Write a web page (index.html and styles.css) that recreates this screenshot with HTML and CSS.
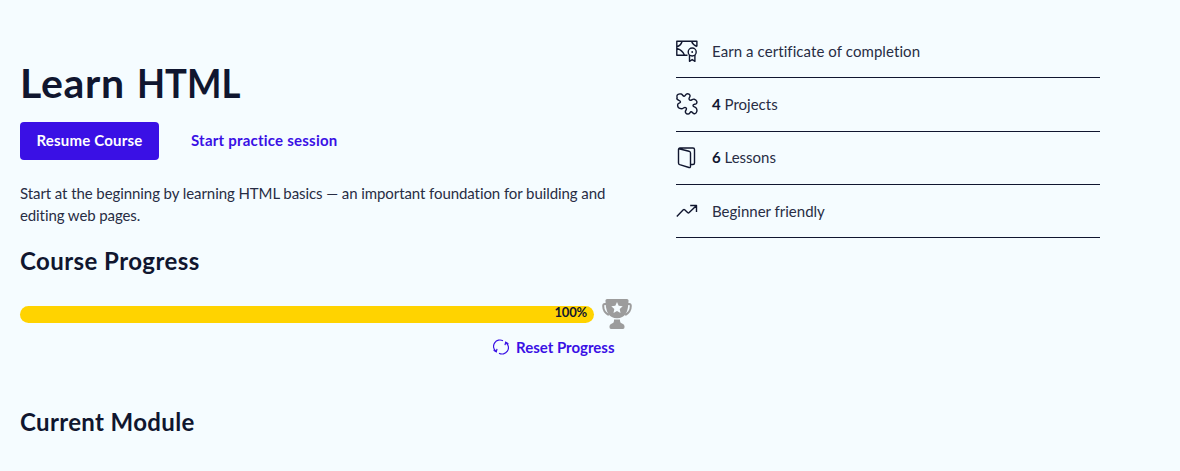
FILE: index.html
```html
<!DOCTYPE html>
<html lang="en">
<head>
<meta charset="utf-8">
<title>Learn HTML</title>
<link rel="stylesheet" href="styles.css">
</head>
<body>
<div class="page">
  <main class="course">
    <h1 class="title">Learn <span class="title-tag">HTML</span></h1>
    <div class="actions">
      <button class="resume"><span>Resume Course</span></button>
      <a class="practice"><span>Start practice session</span></a>
    </div>
    <p class="summary"><span class="line-one">Start at the beginning by learning HTML basics — an important foundation for building and</span><br><span class="line-two">editing web pages.</span></p>
    <h2 class="section-title progress-title"><span>Course Progress</span></h2>
    <div class="progress">
      <div class="bar"><span class="percent">100%</span></div>
      <svg class="trophy" viewBox="0 0 30 30">
        <path d="M5 5H2.8Q1.2 5 1.2 7C1.2 11 3 14 6.8 16M25 5h2.2q1.6 0 1.6 2c0 4-1.8 7-5.6 9" fill="none" stroke="#9c9c9c" stroke-width="2"/>
        <path d="M3.5 1.5Q3.5 0 5 0h20q1.500 0 1.500 1.500C26.500 13 23 19.200 15 19.200S3.500 13 3.500 1.500z" fill="#9c9c9c"/>
        <path d="M12 20.500h6v1.500q0 2 2.500 2.700Q22.500 25.300 22.500 27.300V28.300Q22.500 30 21 30H9Q7.500 30 7.500 28.300V27.300Q7.500 25.300 9.500 24.700 12 24 12 22z" fill="#9c9c9c"/>
        <path d="m15 3 1.700 3.700 4 .5-3 2.800.8 4-3.500-2-3.500 2 .8-4-3-2.800 4-.5z" fill="#f5fcff"/>
      </svg>
    </div>
    <a class="reset">
      <svg class="reset-icon" viewBox="0 0 16 16" fill="none" stroke="currentColor" stroke-width="1.200">
        <path d="M10 1.800A6.400 6.400 0 0 0 2.800 12.300M6 14.200A6.400 6.400 0 0 0 13.200 3.700"/>
        <path d="M.6 11.300 3.300 12.800 4 9.800M15.400 4.700 12.700 3.200 12 6.200"/>
      </svg>
      <span>Reset Progress</span>
    </a>
    <h2 class="section-title module-title"><span>Current Module</span></h2>
  </main>
  <ul class="facts">
    <li class="fact">
      <svg class="icon" viewBox="0 0 22 22">
        <path d="M11.500 15.300H.8V1.300h20.100v5.300M.8 6.700Q4.800 5.800 6.200 1.300M15.500 1.300Q17 5.300 20.900 6.500M.8 8.500Q6.200 9.700 8.600 15.300"/>
        <circle cx="16.200" cy="12" r="4"/><circle class="dot" cx="16.200" cy="12" r=".9"/>
        <path d="M13.500 15v6.300l2.700-1.800 2.700 1.800V15"/>
      </svg>
      <span class="certificate">Earn a certificate of completion</span>
    </li>
    <li class="fact">
      <svg class="icon" viewBox="0 0 22 22">
        <path d="M1 3.500C.5 1.500 3 .5 5.200 1 6.800 1.400 6.800 3.700 8.500 3.200 9.700 2.700 9.400.8 11.500.8 14 .8 14.600 3 13.400 4.600 12.500 6 13.500 7.500 15 7.200 16.300 7 16.500 5.800 18.200 6.200 20.700 6.800 21.800 9.600 20 10.800 18.800 11.500 17 11 17 12.400 17 14 19.300 13.500 20.400 15.300 21.400 17 21 20 19 20.700 17 21.500 16.600 18.700 15.200 18.800 13.700 18.900 14 21 12 21 9.900 21 8.700 19 9.800 17.500 10.900 16 10.600 14.500 9 14.400 7.500 14.400 7.400 15.700 5.500 15.700 3 15.700 1.600 14 1.600 12 1.600 10 4.300 10.500 4.500 9 4.700 7.300 2 7.500 1 6 .5 5 1.500 4.500 1 3.500z"/>
      </svg>
      <span class="projects"><b>4</b> Projects</span>
    </li>
    <li class="fact">
      <svg class="icon" viewBox="0 0 22 22">
        <path d="M3 1.700 13 4.200Q14.500 4.700 14.500 6V19.300Q14.500 21 13 20.500L3.700 17.700Q2.500 17.300 2.500 16V2.500Q2.500 1 4 1H17Q18.500 1 18.500 2.500V16Q18.500 17.500 17 17.500H14.700"/>
      </svg>
      <span class="lessons"><b>6</b> Lessons</span>
    </li>
    <li class="fact">
      <svg class="icon" viewBox="0 0 22 22">
        <path d="M.8 16.500 7.300 9.800Q8 9.300 8.700 9.800L11.800 12.800Q12.500 13.300 13.200 12.600L20 5.900M14.200 5.500H20.500V12"/>
      </svg>
      <span class="friendly">Beginner friendly</span>
    </li>
  </ul>
</div>
</body>
</html>
```
FILE: styles.css
```css
* { box-sizing: border-box; }
body { margin: 0; background: #f5fcff; color: #10162f; font-family: Lato, sans-serif; font-size: 15px; font-variant-ligatures: none; }
h1, h2, p, ul { margin: 0; padding: 0; }
.page { display: flex; height: 471px; padding-left: 20px; overflow: hidden; }
.course { width: 612px; margin-right: 44px; }
.title { padding-top: 58px; font-size: 41px; line-height: 50px; letter-spacing: .7px; }
.title-tag { display: inline-block; margin-left: 1px; letter-spacing: 0; transform: scaleX(.89); transform-origin: left; }
.actions { display: flex; align-items: center; margin-top: 14px; height: 38px; }
.resume { width: 139px; height: 38px; padding: 0 0 2px; border: 0; border-radius: 4px; background: #3a10e5; color: #fff; font: bold 15px Lato, sans-serif; letter-spacing: .2px; }
.practice { margin-left: 32px; padding-bottom: 2px; color: #3a10e5; font-weight: bold; letter-spacing: .22px; }
.summary { margin-top: 22px; line-height: 22px; white-space: nowrap; color: #282d44; }
.line-one { letter-spacing: -.08px; }
.line-two { letter-spacing: -.1px; }
.section-title { font-size: 24px; line-height: 32px; letter-spacing: .43px; }
.progress-title { margin-top: 19px; }
.progress { display: flex; align-items: center; margin-top: 22px; height: 30px; }
.bar { width: 574px; height: 17px; border-radius: 9px; background: #ffd300; padding-right: 7px; text-align: right; font-size: 13px; font-weight: bold; line-height: 13px; letter-spacing: -.2px; }
.trophy { width: 30px; height: 30px; margin-left: 8px; }
.reset { display: flex; align-items: center; margin: 8px 0 0 473px; height: 20px; color: #3a10e5; font-weight: bold; white-space: nowrap; }
.reset-icon { width: 16px; height: 16px; margin-right: 7px; }
.module-title { margin-top: 49px; letter-spacing: .35px; }
.facts { width: 424px; padding-top: 25px; list-style: none; color: #282d44; }
.fact { display: flex; align-items: center; height: 53.300px; border-bottom: 1px solid #10162f; }
.fact span { padding-bottom: 1px; }
.certificate { letter-spacing: .08px; }
.icon { width: 22px; height: 22px; margin-right: 14px; fill: none; stroke: #10162f; stroke-width: 1.400; stroke-linejoin: round; }
.dot { fill: #10162f; stroke: none; }
.fact b { color: #10162f; }
```
